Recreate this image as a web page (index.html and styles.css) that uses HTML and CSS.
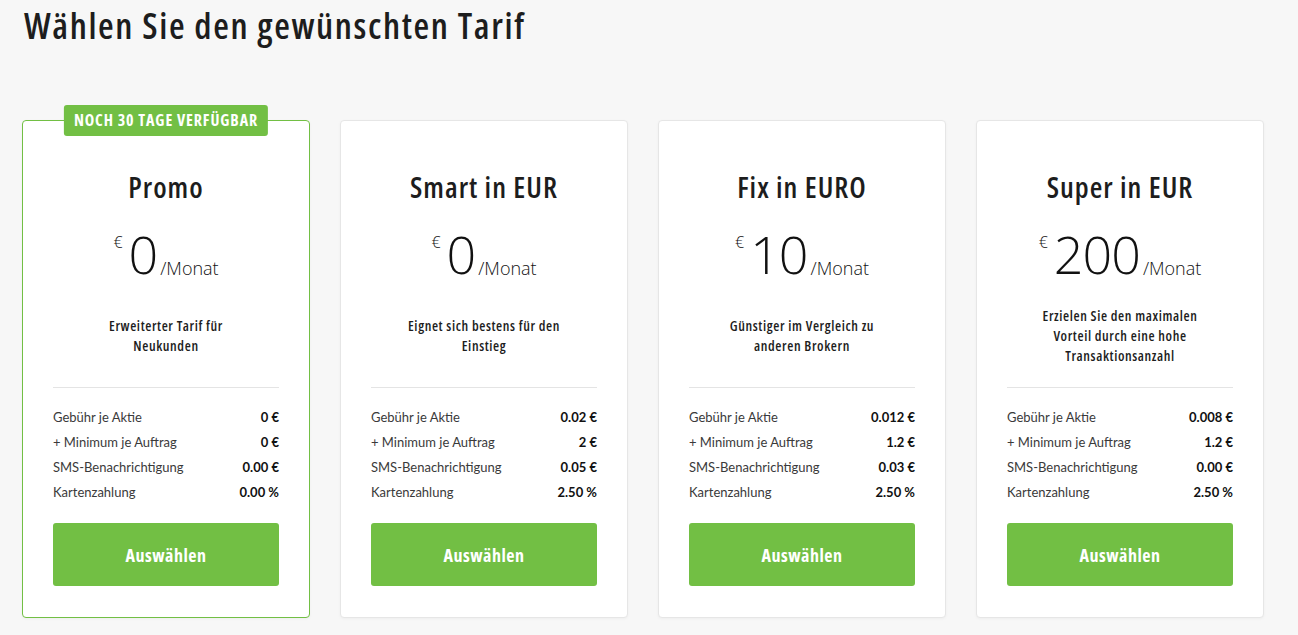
FILE: index.html
```html
<!DOCTYPE html>
<html lang="de">
<head>
<meta charset="utf-8">
<title>Tarife</title>
<link rel="stylesheet" href="styles.css">
</head>
<body>
<h1 class="page-title">Wählen Sie den gewünschten Tarif</h1>
<div class="plans">
  <div class="card card-promo">
    <div class="badge">NOCH 30 TAGE VERFÜGBAR</div>
    <h2 class="plan-name">Promo</h2>
    <div class="price"><span class="cur">€</span><span class="amount">0</span><span class="per">/Monat</span></div>
    <div class="desc"><p>Erweiterter Tarif für<br>Neukunden</p></div>
    <hr class="divider">
    <dl class="rows">
      <div class="row"><dt>Gebühr je Aktie</dt><dd>0 €</dd></div>
      <div class="row"><dt>+ Minimum je Auftrag</dt><dd>0 €</dd></div>
      <div class="row"><dt>SMS-Benachrichtigung</dt><dd>0.00 €</dd></div>
      <div class="row"><dt>Kartenzahlung</dt><dd>0.00 %</dd></div>
    </dl>
    <button class="btn">Auswählen</button>
  </div>
  <div class="card">
    <h2 class="plan-name">Smart in EUR</h2>
    <div class="price"><span class="cur">€</span><span class="amount">0</span><span class="per">/Monat</span></div>
    <div class="desc"><p>Eignet sich bestens für den<br>Einstieg</p></div>
    <hr class="divider">
    <dl class="rows">
      <div class="row"><dt>Gebühr je Aktie</dt><dd>0.02 €</dd></div>
      <div class="row"><dt>+ Minimum je Auftrag</dt><dd>2 €</dd></div>
      <div class="row"><dt>SMS-Benachrichtigung</dt><dd>0.05 €</dd></div>
      <div class="row"><dt>Kartenzahlung</dt><dd>2.50 %</dd></div>
    </dl>
    <button class="btn">Auswählen</button>
  </div>
  <div class="card">
    <h2 class="plan-name">Fix in EURO</h2>
    <div class="price"><span class="cur">€</span><span class="amount">10</span><span class="per">/Monat</span></div>
    <div class="desc"><p>Günstiger im Vergleich zu<br>anderen Brokern</p></div>
    <hr class="divider">
    <dl class="rows">
      <div class="row"><dt>Gebühr je Aktie</dt><dd>0.012 €</dd></div>
      <div class="row"><dt>+ Minimum je Auftrag</dt><dd>1.2 €</dd></div>
      <div class="row"><dt>SMS-Benachrichtigung</dt><dd>0.03 €</dd></div>
      <div class="row"><dt>Kartenzahlung</dt><dd>2.50 %</dd></div>
    </dl>
    <button class="btn">Auswählen</button>
  </div>
  <div class="card">
    <h2 class="plan-name">Super in EUR</h2>
    <div class="price"><span class="cur">€</span><span class="amount">200</span><span class="per">/Monat</span></div>
    <div class="desc"><p>Erzielen Sie den maximalen<br>Vorteil durch eine hohe<br>Transaktionsanzahl</p></div>
    <hr class="divider">
    <dl class="rows">
      <div class="row"><dt>Gebühr je Aktie</dt><dd>0.008 €</dd></div>
      <div class="row"><dt>+ Minimum je Auftrag</dt><dd>1.2 €</dd></div>
      <div class="row"><dt>SMS-Benachrichtigung</dt><dd>0.00 €</dd></div>
      <div class="row"><dt>Kartenzahlung</dt><dd>2.50 %</dd></div>
    </dl>
    <button class="btn">Auswählen</button>
  </div>
</div>
</body>
</html>
```

FILE: styles.css
```css
html, body {
  margin: 0;
  padding: 0;
}
body {
  background: #f7f7f7;
  color: #1a1a1a;
  font-family: "Open Sans", "Roboto", sans-serif;
  font-stretch: 75%;
  width: 1298px;
  height: 635px;
  overflow: hidden;
}
.page-title {
  margin: 0;
  padding: 6px 0 0 24px;
  font-size: 36px;
  line-height: 40px;
  font-weight: 600;
  letter-spacing: 1.6px;
  color: #1d1d1d;
}
.plans {
  display: flex;
  gap: 30px;
  padding: 74px 0 0 22px;
}
.card {
  position: relative;
  box-sizing: border-box;
  width: 288px;
  height: 498px;
  background: #fff;
  border: 1px solid #e6e6e6;
  border-radius: 4px;
  box-shadow: 0 1px 3px rgba(0,0,0,0.04);
  padding: 50px 30px 30px;
  display: flex;
  flex-direction: column;
  align-items: stretch;
}
.card-promo {
  border-color: #72bf44;
}
.badge {
  position: absolute;
  top: -16px;
  left: 50%;
  transform: translateX(-50%);
  background: #72bf44;
  color: #fff;
  font-weight: 700;
  font-size: 16px;
  letter-spacing: 0.9px;
  line-height: 31px;
  height: 31px;
  padding: 0 10px;
  border-radius: 3px;
  white-space: nowrap;
}
.plan-name {
  margin: 0;
  text-align: center;
  font-size: 29px;
  line-height: 32px;
  font-weight: 600;
  letter-spacing: 1px;
  color: #1d1d1d;
}
.price {
  display: flex;
  justify-content: center;
  align-items: flex-start;
  margin-top: 25px;
  height: 58px;
  font-family: "Open Sans", sans-serif;
  font-stretch: 100%;
  font-weight: 300;
  color: #111;
}
.cur {
  font-size: 16px;
  line-height: 20px;
  margin-top: 4px;
  margin-right: 6px;
}
.amount {
  font-size: 52px;
  line-height: 52px;
  letter-spacing: -1px;
}
.per {
  font-size: 18px;
  line-height: 20px;
  margin-top: 30px;
  margin-left: 3px;
}
.desc {
  margin: 20px 0 21px;
  height: 60px;
  display: flex;
  flex-direction: column;
  justify-content: center;
}
.desc p {
  margin: 0;
  text-align: center;
  font-size: 14px;
  line-height: 20px;
  font-weight: 600;
  letter-spacing: 0.6px;
  color: #1d1d1d;
}
.divider {
  border: 0;
  border-top: 1px solid #e4e4e4;
  margin: 0 0 17px;
}
.rows {
  margin: 0;
  font-family: "Lato", sans-serif;
  font-stretch: normal;
  font-size: 13px;
}
.row {
  display: flex;
  justify-content: space-between;
  height: 25px;
  line-height: 25px;
}
.row dt {
  color: #3a3a3a;
  font-weight: 400;
}
.row dd {
  margin: 0;
  font-weight: 700;
  color: #111;
}
.btn {
  margin-top: 18px;
  height: 63px;
  border: 0;
  border-radius: 3px;
  background: #72bf44;
  color: #fff;
  font-family: "Open Sans", "Roboto", sans-serif;
  font-stretch: 75%;
  font-weight: 700;
  font-size: 18px;
  letter-spacing: 0.5px;
  cursor: pointer;
}
```
